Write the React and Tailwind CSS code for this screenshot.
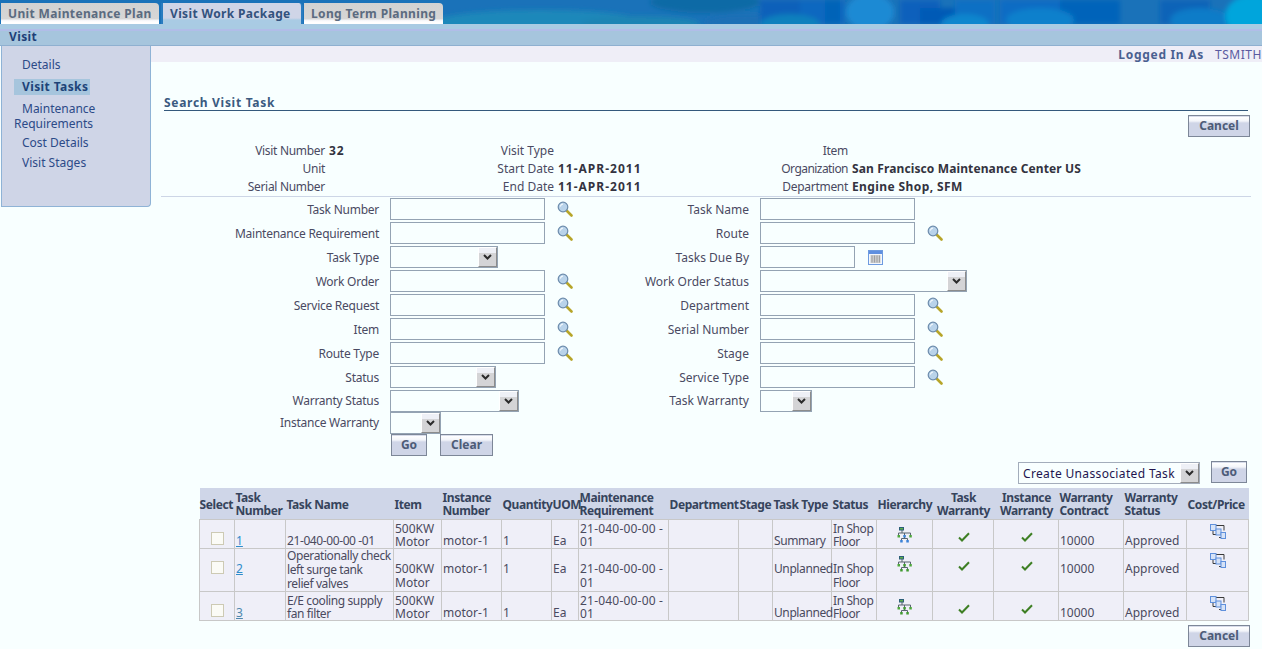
const leftFields = [
  { label: "Task Number", kind: "lookup" },
  { label: "Maintenance Requirement", kind: "lookup" },
  { label: "Task Type", kind: "select", width: "w-[108px]" },
  { label: "Work Order", kind: "lookup" },
  { label: "Service Request", kind: "lookup" },
  { label: "Item", kind: "lookup" },
  { label: "Route Type", kind: "lookup" },
  { label: "Status", kind: "select", width: "w-[106px]" },
  { label: "Warranty Status", kind: "select", width: "w-[129px]" },
  { label: "Instance Warranty", kind: "select", width: "w-[51px]" },
];

const rightFields = [
  { label: "Task Name", kind: "input" },
  { label: "Route", kind: "lookup" },
  { label: "Tasks Due By", kind: "date" },
  { label: "Work Order Status", kind: "select", width: "w-[207px]" },
  { label: "Department", kind: "lookup" },
  { label: "Serial Number", kind: "lookup" },
  { label: "Stage", kind: "lookup" },
  { label: "Service Type", kind: "lookup" },
  { label: "Task Warranty", kind: "select", width: "w-[52px]" },
  null,
];

const rowHeights = [
  "h-[24px]", "h-[24px]", "h-[24px]", "h-[24px]", "h-[24px]",
  "h-[24px]", "h-[24px]", "h-[24px]", "h-[23px]", "h-[22px]",
];

const columns = [
  ["Select", "w-[35px]", "pl-0 text-left"],
  ["Task Number", "w-[51px]", "pl-px text-left"],
  ["Task Name", "w-[108px]", "pl-px text-left"],
  ["Item", "w-[48px]", "pl-px text-left"],
  ["Instance Number", "w-[60px]", "pl-px text-left"],
  ["Quantity", "w-[50px]", "pl-px text-left"],
  ["UOM", "w-[27px]", "pl-px text-left"],
  ["Maintenance Requirement", "w-[90px]", "pl-px text-left"],
  ["Department", "w-[70px]", "pl-px text-left"],
  ["Stage", "w-[34px]", "pl-px text-left"],
  ["Task Type", "w-[59px] whitespace-nowrap", "pl-px text-left"],
  ["Status", "w-[45px]", "pl-px text-left"],
  ["Hierarchy", "w-[56px]", "pl-px text-left"],
  ["Task Warranty", "w-[61px]", "pl-px text-center"],
  ["Instance Warranty", "w-[65px]", "pl-px text-center"],
  ["Warranty Contract", "w-[65px]", "pl-px text-left"],
  ["Warranty Status", "w-[63px]", "pl-px text-left"],
  ["Cost/Price", "w-[62px]", "pl-px text-left"],
];

// two lines sit tighter than the three line task name
const TOP = "pt-[2px] leading-[13px]";
const FULL = "pt-0";
const LOW = "pt-[14px]";
const MID = "pt-[13px]";

const tasks = [
  {
    no: "1", link: "text-[#2f8ccb]", name: "21-040-00-00 -01", type: "Summary", height: "h-[28px]",
    namePad: LOW, twoLine: TOP, oneLine: LOW, statusPad: TOP, tree: "#3b82d6",
  },
  {
    no: "2", link: "text-[#2f8ccb]", name: "Operationally check\nleft surge tank\nrelief valves", type: "Unplanned", height: "h-[42px]",
    namePad: FULL, twoLine: MID, oneLine: MID, statusPad: MID, tree: "#3f9a2f",
  },
  {
    no: "3", link: "text-[#4d87ad]", name: "E/E cooling supply\nfan filter", type: "Unplanned", height: "h-[28px]",
    namePad: TOP, twoLine: TOP, oneLine: LOW, statusPad: TOP, tree: "#3f9a2f",
  },
];

function Search() {
  return (
    <svg width="16" height="16" viewBox="0 0 16 16" className="ml-[12px] shrink-0">
      <path d="M9.5 9.5 L14.5 14.5" stroke="#b7a52a" strokeWidth="2.6" strokeLinecap="round" />
      <circle cx="6" cy="6" r="4.8" fill="#b9d3ea" stroke="#6c8bab" strokeWidth="1.2" />
      <path d="M3.4 5.5 A3 3 0 0 1 6 3" stroke="#ffffff" strokeWidth="1.2" fill="none" />
    </svg>
  );
}

function CalendarIcon() {
  return (
    <svg width="15" height="15" viewBox="0 0 15 15" className="ml-[13px] shrink-0">
      <rect x="0.5" y="0.5" width="14" height="14" fill="#f4f7fb" stroke="#6e9be0" />
      <rect x="1" y="1" width="13" height="3" fill="#5f8fe0" />
      <path d="M2.5 6h10M2.5 8h10M2.5 10h10M2.5 12h10M4 5.5v7M6.5 5.5v7M9 5.5v7M11.5 5.5v7" stroke="#a0a0a0" strokeWidth="1" />
    </svg>
  );
}

function Chevron() {
  return (
    <svg width="9" height="6" viewBox="0 0 9 6">
      <path d="M1 1 L4.5 4.5 L8 1" fill="none" stroke="#2b2b2b" strokeWidth="2" />
    </svg>
  );
}

function SelectBox({ width, label, small }) {
  return (
    <div className={`${width} ${small ? "border-[#a3adbb]" : "border-[#94a3b3]"} flex h-[22px] items-stretch justify-between border bg-[#f8ffff]`}>
      <span className="min-w-0 truncate pl-[4px] text-[12px] leading-[22px] tracking-[0.35px] text-[#22154e]">{label}</span>
      <span className="flex w-[19px] shrink-0 items-center justify-center border border-t-white border-l-white border-r-[#8c8c8c] border-b-[#8c8c8c] bg-[linear-gradient(#eef0f6_0%,#eef0f6_30%,#d4d4d6_30%,#d4d4d6_100%)]">
        <Chevron />
      </span>
    </div>
  );
}

function TextBox({ width = "w-[155px]" }) {
  return <input className={`${width} h-[22px] border border-[#94a3b3] bg-[#f8ffff] outline-none`} />;
}

function Control({ field }) {
  if (!field) return null;
  if (field.kind === "select") return <SelectBox width={field.width} />;
  if (field.kind === "date") {
    return (
      <div className="flex items-center">
        <TextBox width="w-[95px]" />
        <CalendarIcon />
      </div>
    );
  }
  return (
    <div className="flex items-center">
      <TextBox />
      {field.kind === "lookup" && <Search />}
    </div>
  );
}

function Btn({ children, className = "" }) {
  return (
    <button className={`${className} h-[22px] border border-[#7d8798] bg-[linear-gradient(#d7dcea_0,#d7dcea_1px,#ffffff_1px,#f3f5fa_5px,#cfd5e7_7px,#cfd5e7_100%)] text-[12px] font-bold leading-[18px] text-[#4d5c78]`}>
      {children}
    </button>
  );
}

function Tab({ children, active, className }) {
  return (
    <div
      className={`${className} flex h-[21px] items-center rounded-tr-[4px] pl-[7px] text-[12px] font-bold tracking-[0.35px] ${
        active
          ? "border-x-2 border-[#2a7cc0] bg-[linear-gradient(#cfd5e7_0,#cfd5e7_15px,#a9cbe4_17px)] text-[#33527e]"
          : "bg-[linear-gradient(#d2d2d2_0,#d6d6d6_16px,#f2f4f8_17px,#ffffff_19px)] text-[#5b6b80]"
      }`}
    >
      {children}
    </div>
  );
}

function Banner() {
  return (
    <svg className="absolute inset-0 h-full w-full" viewBox="0 0 1262 24" preserveAspectRatio="none">
      <defs>
        <filter id="soft"><feGaussianBlur stdDeviation="2.5" /></filter>
      </defs>
      <rect width="1262" height="24" fill="#1a72b9" />
      <g filter="url(#soft)">
        <ellipse cx="540" cy="24" rx="110" ry="14" fill="#1c88ba" />
        <ellipse cx="640" cy="24" rx="60" ry="8" fill="#1c84b4" />
        <ellipse cx="705" cy="2" rx="55" ry="11" fill="#0f6aa6" />
        <ellipse cx="745" cy="22" rx="40" ry="8" fill="#1a70b6" />
        <rect x="760" y="0" width="40" height="24" fill="#0860ba" />
        <rect x="800" y="0" width="45" height="24" fill="#0a68c0" />
        <ellipse cx="790" cy="24" rx="30" ry="10" fill="#0f80bd" />
        <rect x="825" y="0" width="15" height="24" fill="#0664b8" />
        <ellipse cx="870" cy="12" rx="24" ry="18" fill="#1c8ad4" />
        <rect x="900" y="0" width="40" height="24" fill="#0860bc" />
        <rect x="920" y="8" width="36" height="16" fill="#055ab6" />
        <rect x="955" y="0" width="40" height="24" fill="#0c70c4" />
        <ellipse cx="965" cy="24" rx="24" ry="10" fill="#0c86ce" />
        <rect x="1000" y="0" width="70" height="24" fill="#0a6cc4" />
        <rect x="1060" y="0" width="60" height="24" fill="#0664ba" />
        <ellipse cx="1040" cy="20" rx="34" ry="12" fill="#0f80cc" />
        <rect x="1160" y="0" width="50" height="24" fill="#0a64b8" />
        <ellipse cx="1200" cy="20" rx="30" ry="12" fill="#0a7cc8" />
        <ellipse cx="1255" cy="16" rx="30" ry="22" fill="#00a5dc" />
      </g>
    </svg>
  );
}

function HierarchyIcon({ color }) {
  return (
    <svg width="16" height="16" viewBox="0 0 16 16">
      <path d="M5 3v3M1.5 6h12M1.5 6v2M7.5 6v2M13.5 6v2M7.5 10v1.5M4.5 11.5h6M4.5 11.5v1.5M10.5 11.5v1.5" fill="none" stroke="#5a6470" strokeWidth="1" />
      <rect x="2.5" y="0.5" width="4" height="2.5" fill="#5fae4a" stroke="#2c5f78" strokeWidth="1" />
      <rect x="0.5" y="8" width="2.5" height="2.5" fill="#4fa83c" />
      <rect x="6.3" y="8" width="2.5" height="2.5" fill={color} />
      <rect x="12.3" y="8" width="2.5" height="2.5" fill="#4fa83c" />
      <rect x="3.2" y="13" width="2.5" height="2.5" fill={color} />
      <rect x="9.3" y="13" width="2.5" height="2.5" fill={color} />
    </svg>
  );
}

function CheckIcon() {
  return (
    <svg width="12" height="10" viewBox="0 0 12 10">
      <path d="M1 5.5 L4 8.5 L11 1.2" fill="none" stroke="#3e7f24" strokeWidth="2" />
    </svg>
  );
}

function CostIcon() {
  return (
    <svg width="16" height="16" viewBox="0 0 16 16">
      <path d="M6 1.5h8v5M3 7v3.5h3M9 13.5h3" fill="none" stroke="#3a3a3a" strokeWidth="1" />
      <rect x="0.5" y="0.5" width="5.5" height="6" fill="#d6e2f6" stroke="#5f90dc" />
      <rect x="6" y="5" width="5" height="6" fill="#d6e2f6" stroke="#5f90dc" />
      <rect x="11" y="8.5" width="4.5" height="6" fill="#d6e2f6" stroke="#5f90dc" />
    </svg>
  );
}

function Sidebar() {
  return (
    <aside className="ml-px h-[161px] w-[150px] shrink-0 rounded-br-[4px] border-x border-b border-[#8fb3d6] bg-[#cfd5e7] pl-[12px] pt-[11px] text-[12px] leading-[15px] text-[#2c4a88]">
      <div className="h-[15px] pl-[8px]">Details</div>
      <div className="mt-[7px] h-[16px] w-[76px] bg-[#a6c5dd] pl-[8px] font-bold leading-[16px] tracking-[0.4px] text-[#1d4378]">Visit Tasks</div>
      <div className="mt-[6px] indent-[8px]">Maintenance Requirements</div>
      <div className="mt-[4px] pl-[8px]">Cost Details</div>
      <div className="mt-[5px] pl-[8px]">Visit Stages</div>
    </aside>
  );
}

function InfoBlock() {
  const label = "text-right tracking-[-0.3px] text-[#4a4a62]";
  const midLabel = "text-right text-[#4a4a62]";
  const orgLabel = "text-right tracking-[-0.55px] text-[#4a4a62]";
  const date = "font-bold tracking-[1px] text-[#333340]";
  return (
    <div className="mt-[5px] grid grid-cols-[164px_60px_161px_100px_186px_1fr] gap-x-[4px] pl-[10px] text-[12px] leading-[18px]">
      <span className={label}>Visit Number</span>
      <span className={date}>32</span>
      <span className={midLabel}>Visit Type</span>
      <span />
      <span className={label}>Item</span>
      <span />
      <span className={label}>Unit</span>
      <span />
      <span className={midLabel}>Start Date</span>
      <span className={date}>11-APR-2011</span>
      <span className={orgLabel}>Organization</span>
      <span className="font-bold tracking-[0.12px] text-[#333340]">San Francisco Maintenance Center US</span>
      <span className={label}>Serial Number</span>
      <span />
      <span className={midLabel}>End Date</span>
      <span className={date}>11-APR-2011</span>
      <span className={label}>Department</span>
      <span className="font-bold tracking-[0.4px] text-[#333340]">Engine Shop, SFM</span>
    </div>
  );
}

function SearchForm() {
  return (
    <div className="ml-[10px] text-[12px] text-[#4a4a62]">
      {leftFields.map((left, i) => {
        const right = rightFields[i];
        const nudge = i < 8 ? "pt-[2px]" : "pt-0";
        return (
          <div key={left.label} className={`${rowHeights[i]} grid grid-cols-[218px_190px_158px_1fr] items-center gap-x-[11px]`}>
            <span className={`${nudge} text-right tracking-[-0.25px]`}>{left.label}</span>
            <Control field={left} />
            <span className={`${nudge} text-right`}>{right ? right.label : ""}</span>
            <Control field={right} />
          </div>
        );
      })}
      <div className="ml-[230px] flex gap-[13px]">
        <Btn className="w-[36px]">Go</Btn>
        <Btn className="w-[53px]">Clear</Btn>
      </div>
    </div>
  );
}

function TaskTable() {
  const td = "border border-[#c8c8c8] p-0 pl-px align-top text-[12px] text-[#4a4a5e]";
  const tight = "tracking-[-0.4px]";
  return (
    <table className="ml-[48px] w-[1049px] table-fixed border-collapse">
      <thead>
        <tr className="h-[31px] bg-[#cfd6e8]">
          {columns.map(([name, width, align]) => (
            <th
              key={name}
              className={`${width} ${align} pb-0 pr-0 pt-[2px] text-[12px] font-bold leading-[13px] tracking-[-0.4px] text-[#36445c]`}
            >
              {name}
            </th>
          ))}
        </tr>
      </thead>
      <tbody className="leading-[14px]">
        {tasks.map((t) => (
          <tr key={t.no} className={`${t.height} bg-[#efeff8]`}>
            <td className={`${td} pt-[12px]`}>
              <div className="ml-[10px] h-[13px] w-[13px] border border-[#cdcab4] bg-[#fbfbf6]" />
            </td>
            <td className={`${td} ${t.oneLine}`}>
              <span className={`${t.link} underline`}>{t.no}</span>
            </td>
            <td className={`${td} ${t.namePad} ${tight} whitespace-pre-line`}>{t.name}</td>
            <td className={`${td} ${t.twoLine}`}>500KW Motor</td>
            <td className={`${td} ${t.oneLine}`}>motor-1</td>
            <td className={`${td} ${t.oneLine}`}>1</td>
            <td className={`${td} ${t.oneLine}`}>Ea</td>
            <td className={`${td} ${t.twoLine} tracking-[0.2px]`}>21-040-00-00 - 01</td>
            <td className={td} />
            <td className={td} />
            <td className={`${td} ${t.oneLine} ${tight}`}>{t.type}</td>
            <td className={`${td} ${t.statusPad} ${tight}`}>In Shop Floor</td>
            <td className={`${td} pt-[7px]`}>
              <div className="flex justify-center"><HierarchyIcon color={t.tree} /></div>
            </td>
            <td className={`${td} pt-[12px]`}>
              <div className="flex justify-center"><CheckIcon /></div>
            </td>
            <td className={`${td} pt-[12px]`}>
              <div className="flex justify-center"><CheckIcon /></div>
            </td>
            <td className={`${td} ${t.oneLine}`}>10000</td>
            <td className={`${td} ${t.oneLine}`}>Approved</td>
            <td className={`${td} pt-[4px]`}>
              <div className="flex justify-center"><CostIcon /></div>
            </td>
          </tr>
        ))}
      </tbody>
    </table>
  );
}

export default function App() {
  return (
    <div className="h-screen w-full overflow-hidden bg-[#f8ffff] font-['Noto_Sans',sans-serif]">
      <header className="relative flex h-[24px] items-end">
        <Banner />
        <div className="relative ml-px flex gap-[1px]">
          <Tab className="w-[158px]">Unit Maintenance Plan</Tab>
          <Tab active className="ml-[1px] w-[142px]">Visit Work Package</Tab>
          <Tab className="w-[139px]">Long Term Planning</Tab>
        </div>
      </header>
      <div className="h-[5px] bg-[#a9cbe3]" />
      <div className="h-[17px] border-b border-[#8fb0d0] bg-[#a6c5dd] text-[12px] font-bold leading-[11px] tracking-[0.4px] text-[#1e3f78]">
        <div className="h-[2px] bg-[#b1bde8]" />
        <span className="pl-[9px]">Visit</span>
      </div>
      <div className="flex">
        <Sidebar />
        <main className="min-w-0 flex-1">
          <div className="flex h-[16px] justify-end gap-[11px] whitespace-nowrap bg-[#efeef7] text-[12px] leading-[17px]">
            <span className="font-bold tracking-[0.7px] text-[#4a6090]">Logged In As</span>
            <span className="tracking-[0.55px] text-[#5a5aa0]">TSMITH</span>
          </div>
          <div className="pt-[33px]">
            <h2 className="ml-[13px] mr-[14px] h-[16px] border-b border-[#34597c] text-[12px] font-bold leading-[16px] tracking-[0.7px] text-[#3a5a80]">
              Search Visit Task
            </h2>
            <div className="mr-[12px] mt-[4px] flex justify-end">
              <Btn className="w-[62px]">Cancel</Btn>
            </div>
            <InfoBlock />
            <div className="ml-[10px] mr-[11px] h-px bg-[#cdd6e6]" />
            <SearchForm />
            <div className="mr-[15px] mt-[5px] flex items-start justify-end gap-[11px]">
              <div className="mt-px">
                <SelectBox width="w-[182px]" label="Create Unassociated Task" small />
              </div>
              <Btn className="w-[36px]">Go</Btn>
            </div>
            <div className="mt-[4px]">
              <TaskTable />
            </div>
            <div className="mr-[12px] mt-[4px] flex justify-end">
              <Btn className="w-[62px]">Cancel</Btn>
            </div>
          </div>
        </main>
      </div>
    </div>
  );
}
